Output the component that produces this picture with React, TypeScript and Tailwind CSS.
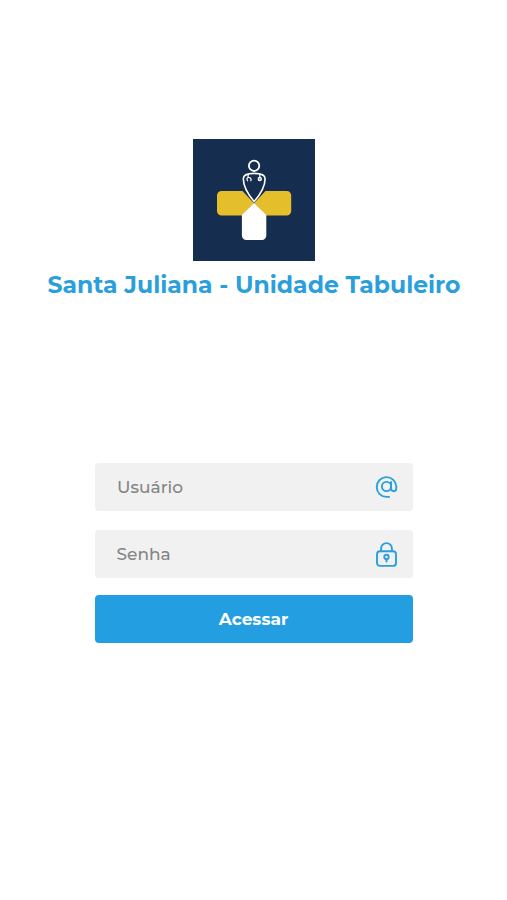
import { useState } from 'react';

function Logo() {
  return (
    <svg
      className="w-[122px] h-[122px] bg-[#152d4e]"
      viewBox="0 0 122 122"
      fill="none"
      role="img"
      aria-label="Santa Juliana"
    >
      <path
        fill="#e4be2b"
        d="M28.5 52H49.5L61 64.3L49 76.5H28.5A4.5 4.5 0 0 1 24 72V56.5A4.5 4.5 0 0 1 28.5 52ZM93.7 52H72.5L61 64.3L73 76.5H93.7A4.5 4.5 0 0 0 98.2 72V56.5A4.5 4.5 0 0 0 93.7 52Z"
      />
      <path
        fill="#fff"
        d="M61 64L73.3 76V96.6A4.5 4.5 0 0 1 68.8 101.1H53.4A4.5 4.5 0 0 1 48.9 96.6V76Z"
      />
      <path
        fill="#152d4e"
        stroke="#fff"
        strokeWidth="1.6"
        strokeLinejoin="round"
        d="M61.1 62.6C56 56.5 50.3 47.5 50.3 39.8C50.3 36 55.5 34.4 61.1 34.4C66.8 34.4 72.1 36 72.1 39.8C72.1 47.5 66.4 56.5 61.1 62.6Z"
      />
      <circle cx="61.1" cy="26.8" r="5.2" stroke="#fff" strokeWidth="1.8" />
      <path
        stroke="#fff"
        strokeWidth="1.2"
        strokeLinecap="round"
        d="M55.1 35.5V38.5M54.6 41.8C53.3 39.7 54.2 38.5 55.8 38.5C57.5 38.5 58.6 39.9 57.8 41.8M66.8 35.5V38.3"
      />
      <circle
        cx="66.8"
        cy="40"
        r="1.6"
        fill="#8d9bb0"
        stroke="#fff"
        strokeWidth="1.2"
      />
    </svg>
  );
}

function AtIcon() {
  return (
    <svg
      className="w-6 h-6 text-[#2b9fdc]"
      viewBox="0 0 24 24"
      fill="none"
      stroke="currentColor"
      strokeWidth="1.9"
      strokeLinecap="round"
    >
      <circle cx="11.5" cy="11.5" r="4.6" />
      <path d="M16.1 6.9V13.6A2.6 2.6 0 0 0 21.3 13.6V11.3A9.8 9.9 0 1 0 11.5 21.9H14.1" />
    </svg>
  );
}

function LockIcon() {
  return (
    <svg
      className="w-6 h-[26px] text-[#2b9fdc]"
      viewBox="0 0 24 26"
      fill="none"
      stroke="currentColor"
      strokeWidth="1.9"
      strokeLinecap="round"
    >
      <rect x="2" y="10.3" width="19" height="14.6" rx="3" />
      <path d="M6.1 10.3V7.5A5.4 5.4 0 0 1 16.9 7.5V10.3" />
      <circle cx="11.5" cy="16" r="2.2" />
      <path d="M11.5 18.3V20.5" />
    </svg>
  );
}

export default function App() {
  const [user, setUser] = useState('');
  const [password, setPassword] = useState('');

  return (
    <main className="min-h-screen bg-white flex flex-col items-center pt-[139px] font-['Montserrat','Inter',sans-serif]">
      <Logo />
      <h1 className="mt-2 pl-px text-[23.5px] leading-8 font-bold whitespace-nowrap text-[#2b9fdc]">
        Santa Juliana - Unidade Tabuleiro
      </h1>

      <form
        className="mt-[162px] w-[318px] flex flex-col"
        onSubmit={(e) => e.preventDefault()}
      >
        <label className="h-12 flex items-center rounded bg-[#f1f1f1] pl-[22.5px] pr-3.5">
          <input
            className="min-w-0 flex-1 pt-0.5 bg-transparent outline-none text-[17px] font-medium text-[#808080] placeholder:text-[#858585]"
            type="text"
            placeholder="Usuário"
            value={user}
            onChange={(e) => setUser(e.target.value)}
          />
          <AtIcon />
        </label>

        <label className="mt-[19px] h-12 flex items-center rounded bg-[#f1f1f1] pl-[22px] pr-3.5">
          <input
            className="min-w-0 flex-1 pt-0.5 bg-transparent outline-none text-[17px] font-medium text-[#808080] placeholder:text-[#858585]"
            type="password"
            placeholder="Senha"
            value={password}
            onChange={(e) => setPassword(e.target.value)}
          />
          <LockIcon />
        </label>

        <button
          type="submit"
          className="mt-[17px] h-12 pt-0.5 rounded bg-[#229ee1] text-[17px] font-bold text-white"
        >
          Acessar
        </button>
      </form>
    </main>
  );
}
